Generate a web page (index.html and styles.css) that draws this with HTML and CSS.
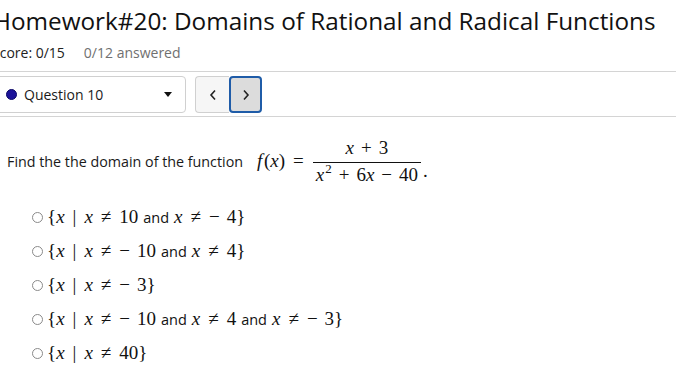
FILE: index.html
```html
<!DOCTYPE html>
<html>
<head>
<meta charset="utf-8">
<link rel="stylesheet" href="styles.css">
</head>
<body>
<div class="page">
  <h1 class="title">Homework#20: Domains of Rational and Radical Functions</h1>
  <div class="meta"><span class="score">Score: 0/15</span><span class="answered">0/12 answered</span></div>
  <div class="toolbar">
    <div class="select">
      <span class="dot"></span>
      <span class="qlabel">Question 10</span>
      <span class="caret"></span>
    </div>
    <div class="nav">
      <button class="navbtn prev"><svg width="8" height="12" viewBox="0 0 8 12"><path d="M6 1.5 L2 6 L6 10.5" fill="none" stroke="#222" stroke-width="1.6"/></svg></button>
      <button class="navbtn next"><svg width="8" height="12" viewBox="0 0 8 12"><path d="M2 1.5 L6 6 L2 10.5" fill="none" stroke="#222" stroke-width="1.6"/></svg></button>
    </div>
  </div>
  <div class="question">
    <span class="qtext">Find the the domain of the function</span>
    <span class="math eq"><i>f</i>&#8202;(<i>x</i>)<span class="rel">=</span><span class="frac"><span class="num"><i>x</i><span class="bin">+</span>3</span><span class="den"><i>x</i><sup>2</sup><span class="bin">+</span>6<i>x</i><span class="bin">−</span>40</span></span><span class="period">.</span></span>
  </div>
  <ul class="options">
    <li><span class="radio"></span><span class="math">{<i>x</i><span class="bar">|</span><i>x</i><span class="rel">≠</span>10</span><span class="and">and</span><span class="math"><i>x</i><span class="rel">≠</span><span class="neg">−</span>4}</span></li>
    <li><span class="radio"></span><span class="math">{<i>x</i><span class="bar">|</span><i>x</i><span class="rel">≠</span><span class="neg">−</span>10</span><span class="and">and</span><span class="math"><i>x</i><span class="rel">≠</span>4}</span></li>
    <li><span class="radio"></span><span class="math">{<i>x</i><span class="bar">|</span><i>x</i><span class="rel">≠</span><span class="neg">−</span>3}</span></li>
    <li><span class="radio"></span><span class="math">{<i>x</i><span class="bar">|</span><i>x</i><span class="rel">≠</span><span class="neg">−</span>10</span><span class="and">and</span><span class="math"><i>x</i><span class="rel">≠</span>4</span><span class="and">and</span><span class="math"><i>x</i><span class="rel">≠</span><span class="neg">−</span>3}</span></li>
    <li><span class="radio"></span><span class="math">{<i>x</i><span class="bar">|</span><i>x</i><span class="rel">≠</span>40}</span></li>
  </ul>
</div>
</body>
</html>
```
FILE: styles.css
```css
* { box-sizing: border-box; }
html, body { margin: 0; padding: 0; background: #fff; overflow: hidden; }
body { font-family: "Open Sans", "Liberation Sans", sans-serif; color: #1a1a1a; }
.page { width: 676px; height: 381px; overflow: hidden; }
.title {
  margin: 0 0 0 -7px;
  padding-top: 5px;
  font-size: 24.3px;
  font-weight: 400;
  line-height: 32px;
  white-space: nowrap;
  color: #111;
}
.meta {
  margin: 6px 0 0 -8px;
  font-size: 14px;
  line-height: 20px;
  display: flex;
  gap: 19px;
  color: #222;
}
.answered { color: #707070; }
.toolbar {
  margin-top: 8px;
  border-top: 1px solid #d4d4d4;
  border-bottom: 1px solid #d4d4d4;
  padding: 4px 0 3px;
  display: flex;
  gap: 9px;
}
.select {
  width: 196px;
  margin-left: -10px;
  height: 37px;
  border: 1px solid #d0d0d0;
  border-radius: 4px;
  display: flex;
  align-items: center;
  padding-left: 15px;
  padding-right: 13px;
  font-size: 14px;
}
.dot { width: 11px; height: 11px; border-radius: 50%; background: #1c1399; border: 1px solid #0b0866; }
.qlabel { margin-left: 7px; flex: 1; }
.caret { width: 0; height: 0; border-left: 4px solid transparent; border-right: 4px solid transparent; border-top: 5px solid #111; }
.nav { display: flex; height: 37px; }
.navbtn {
  width: 34px; height: 37px;
  padding: 0; margin: 0;
  display: flex; align-items: center; justify-content: center;
  font: inherit;
}
.prev { background: #f6f6f6; border: 1px solid #d0d0d0; border-right: none; border-radius: 4px 0 0 4px; }
.next { width: 33px; background: #dcdcdc; border: 2px solid #1f5ca8; border-radius: 4px; }
.question {
  margin-top: 14px;
  padding-left: 7px;
  display: flex;
  align-items: center;
  height: 60px;
  font-size: 14.3px;
}
.qtext { margin-right: 14px; }
.math { font-family: "Liberation Serif", "DejaVu Serif", serif; font-size: 19px; color: #111; white-space: nowrap; }
.math i { font-style: italic; }
.eq { display: inline-flex; align-items: center; }
.rel { margin: 0 8px; }
.eq > .rel { margin: 0 9px 0 8px; }
.bin { margin: 0 7px; }
.frac { display: inline-flex; flex-direction: column; align-items: center; }
.num { padding: 0 2px 3px; border-bottom: 1px solid #111; width: 100%; text-align: center; }
.den { padding: 1px 3px 0; }
.den sup { font-size: 13px; vertical-align: 8px; line-height: 0; margin-left: 1px; }
.period { align-self: flex-end; margin-bottom: 4px; margin-left: 2px; }
.options { list-style: none; margin: 9px 0 0; padding: 0 0 0 32px; }
.options li { display: flex; align-items: center; height: 34px; }
.radio { width: 11px; height: 11px; border: 1px solid #8a8a8a; border-radius: 50%; margin-right: 4px; flex: none; }
.bar { margin: 0 8px; }
.neg { margin-right: 7px; }
.and { font-size: 14.5px; margin: 0 5px; color: #111; }
```
